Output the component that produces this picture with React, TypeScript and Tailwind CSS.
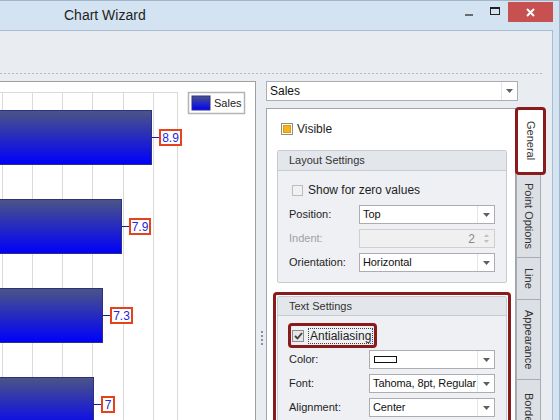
import React from 'react';

const uiFont = { fontFamily: '"Liberation Sans", Arial, sans-serif' };

const bars = [
  { y: 28, end: 151, v: '8.9', lw: 23 },
  { y: 117, end: 121, v: '7.9', lw: 22 },
  { y: 206, end: 102, v: '7.3', lw: 23 },
  { y: 295, end: 93, v: '7', lw: 14 },
];

const gridX = [2, 32, 62, 92, 123, 153, 177];

function Arrow({ color = '#606060' }: { color?: string }) {
  return (
    <svg width="7" height="4" viewBox="0 0 7 4">
      <path d="M0 0h7L3.5 4z" fill={color} />
    </svg>
  );
}

function Combo({ children, className }: { children: React.ReactNode; className: string }) {
  return (
    <div className={`h-[19px] flex items-stretch bg-white border border-[#abadb3] ${className}`}>
      <div className="flex-1 flex items-center pl-[3px] text-[#111] overflow-hidden whitespace-nowrap tracking-[-0.1px]">{children}</div>
      <div className="w-[17px] border-l border-[#e3e3e8] flex items-center justify-center shrink-0">
        <Arrow />
      </div>
    </div>
  );
}

function Row({ label, labelW, children, muted }: { label: string; labelW: string; children: React.ReactNode; muted?: boolean }) {
  return (
    <div className="flex items-center h-[19px]">
      <div className={`${labelW} ${muted ? 'text-[#a0a0a0]' : 'text-[#1e1e1e]'}`}>{label}</div>
      {children}
    </div>
  );
}

function Chart() {
  return (
    <svg width="255" height="338" className="block">
      <defs>
        <linearGradient id="barGrad" x1="0" y1="0" x2="0" y2="1">
          <stop offset="0" stopColor="#4c5585" />
          <stop offset="1" stopColor="#0000fa" />
        </linearGradient>
      </defs>
      {gridX.map((x) => (
        <line key={x} x1={x + 0.5} y1={10} x2={x + 0.5} y2={338} stroke="#dadada" strokeWidth="1" />
      ))}
      <line x1={0} y1={10.5} x2={178} y2={10.5} stroke="#dadada" strokeWidth="1" />
      {bars.map((b) => (
        <g key={b.v}>
          <rect x={-2} y={b.y + 0.5} width={b.end + 2.5} height={54} fill="url(#barGrad)" stroke="#2a3183" strokeWidth="1" />
          <line x1={b.end + 1} y1={b.y + 27.5} x2={b.end + 8} y2={b.y + 27.5} stroke="#1c1ca8" strokeWidth="1" />
          <rect x={b.end + 9} y={b.y + 20} width={b.lw - 2} height={15} fill="#fff" stroke="#e4431c" strokeWidth="2" />
          <text
            x={b.end + 8 + b.lw / 2}
            y={b.y + 32}
            textAnchor="middle"
            fontSize="12"
            fill="#2525e0"
            style={uiFont}
          >
            {b.v}
          </text>
        </g>
      ))}
      <rect x={188.5} y={10.5} width={56} height={21} fill="#fff" stroke="#b4b4b4" strokeWidth="1.5" />
      <rect x={192} y={14} width={18} height={14} fill="url(#barGrad)" stroke="#2a3183" strokeWidth="1" />
      <text x={214} y={25} fontSize="11" fill="#222" style={uiFont}>
        Sales
      </text>
    </svg>
  );
}

function VTab({ label, h }: { label: string; h: string }) {
  return (
    <div className={`${h} w-[25px] ml-[1px] bg-[#dcdfe4] border-x border-b border-[#a9adb3] flex items-center justify-center`}>
      <span className="[writing-mode:vertical-rl] text-[11px] text-[#333] whitespace-nowrap">{label}</span>
    </div>
  );
}

export default function App() {
  return (
    <div className="w-[560px] h-[420px] overflow-hidden bg-[#d3e3f2] border-t border-r border-[#a2b5c9] flex flex-col text-[11px]" style={uiFont}>
      {/* title bar */}
      <div className="h-[29px] flex items-start shrink-0">
        <div className="flex-1 pl-[64px] leading-[29px] text-[14px] text-[#1f1f1f]">Chart Wizard</div>
        <div className="w-[26px] h-[20px] flex items-center justify-center">
          <div className="w-[8px] h-[2px] bg-[#6b6b6b] mt-[7px]" />
        </div>
        <div className="w-[26px] h-[20px] flex items-center justify-center">
          <div className="w-[10px] h-[8px] border border-t-2 border-[#222] -mt-[1px]" />
        </div>
        <div className="w-[45px] h-[20px] mt-[1px] bg-[#c75050] flex items-center justify-center mr-[6px]">
          <svg width="9" height="9" viewBox="0 0 9 9">
            <path d="M1 1l7 7M8 1L1 8" stroke="#fff" strokeWidth="2" />
          </svg>
        </div>
      </div>

      {/* window body */}
      <div className="flex-1 flex flex-col bg-[#e9ecf1] border-t border-r border-[#a9bccf] mr-[6px] min-h-0">
        <div className="h-[42px] shrink-0" />
        <div className="h-[1px] w-[542px] bg-[repeating-linear-gradient(90deg,#b5b8bd_0_2px,transparent_2px_4px)]" />
        <div className="flex flex-1 pt-[7px] min-h-0">
          {/* chart */}
          <div className="w-[256px] bg-white border-t border-r border-[#a0a0a0] shrink-0">
            <Chart />
          </div>

          {/* splitter */}
          <div className="w-[10px] shrink-0 pl-[5px] pt-[250px] flex flex-col gap-[2px]">
            {[0, 1, 2, 3].map((i) => (
              <div key={i} className="w-[2px] h-[2px] bg-[#8592a0]" />
            ))}
          </div>

          {/* settings panel */}
          <div className="flex-1 flex flex-col">
            <div className="w-[252px] h-[20px] flex items-stretch bg-white border border-[#abadb3]">
              <div className="flex-1 flex items-center pl-[3px] text-[12px] text-[#111]">Sales</div>
              <div className="w-[16px] border-l border-[#e3e3e8] flex items-center justify-center">
                <Arrow />
              </div>
            </div>

            <div className="flex items-start mt-[6px]">
              {/* tab page */}
              <div className="w-[250px] h-[330px] mt-[1px] bg-white border border-[#a0a4aa] pl-[10px] pr-[8px] pt-[13px]">
                <div className="flex items-center h-[14px] gap-[4px] ml-[4px]">
                  <div className="w-[12px] h-[12px] border border-[#8c8c8c] bg-white p-[1px]">
                    <div className="w-full h-full bg-[#f6b41c] border border-[#e39a00]" />
                  </div>
                  <span className="text-[12px] text-[#1e1e1e]">Visible</span>
                </div>

                {/* layout settings */}
                <div className="mt-[14px] bg-[#eef0f4] border border-[#c6cbd2] rounded-[2px]">
                  <div className="h-[20px] bg-[#e3e7ec] border-b border-[#c6cbd2] flex items-center pl-[11px] text-[#333]">
                    Layout Settings
                  </div>
                  <div className="pl-[11px] pr-[11px] pt-[12px] pb-[10px] flex flex-col">
                    <div className="flex items-center h-[14px] gap-[5px] pl-[3px]">
                      <div className="w-[11px] h-[11px] border border-[#bdbdbd] bg-[#f1f1f1]" />
                      <span className="text-[#1e1e1e] text-[12px]">Show for zero values</span>
                    </div>
                    <div className="flex flex-col gap-[5px] mt-[8px]">
                      <Row label="Position:" labelW="w-[70px]">
                        <Combo className="w-[136px]">Top</Combo>
                      </Row>
                      <Row label="Indent:" labelW="w-[70px]" muted>
                        <div className="w-[136px] h-[19px] flex items-stretch bg-[#f0f0f0] border border-[#cfcfcf]">
                          <div className="flex-1 flex items-center justify-end pr-[4px] text-[#8a8a8a] text-[12px]">2</div>
                          <div className="w-[15px] flex flex-col items-center justify-center gap-[3px]">
                            <svg width="5" height="3" viewBox="0 0 5 3"><path d="M0 3h5L2.5 0z" fill="#c0c0c0" /></svg>
                            <svg width="5" height="3" viewBox="0 0 5 3"><path d="M0 0h5L2.5 3z" fill="#c0c0c0" /></svg>
                          </div>
                        </div>
                      </Row>
                      <Row label="Orientation:" labelW="w-[70px]">
                        <Combo className="w-[136px]">Horizontal</Combo>
                      </Row>
                    </div>
                  </div>
                </div>

                {/* text settings */}
                <div className="mt-[9px] -mx-[4px] border-[3px] border-[#8b1a1a] rounded-[4px] p-[1px]">
                  <div className="bg-[#eef0f4] border border-[#c6cbd2] rounded-[2px]">
                    <div className="h-[19px] bg-[#e3e7ec] border-b border-[#c6cbd2] flex items-center pl-[11px] text-[#333]">
                      Text Settings
                    </div>
                    <div className="pl-[11px] pr-[11px] pt-[7px] pb-[6px] flex flex-col">
                      <div className="self-start ml-[-1px] h-[25px] border-[3px] border-[#8b1a1a] rounded-[4px] flex items-center pl-[1px] pr-[1px]">
                        <div className="w-[12px] h-[12px] border border-[#8c8c8c] bg-[#e6e6e6] flex items-center justify-center">
                          <svg width="9" height="8" viewBox="0 0 9 8">
                            <path d="M1 4l2.5 2.5L8 1" stroke="#404040" strokeWidth="1.8" fill="none" />
                          </svg>
                        </div>
                        <span className="ml-[4px] px-[1px] border border-dotted border-[#444] text-[12px] leading-[14px] text-[#1e1e1e]">
                          Antialiasing
                        </span>
                      </div>
                      <div className="flex flex-col gap-[5px] mt-[2px]">
                        <Row label="Color:" labelW="w-[80px]">
                          <Combo className="w-[126px]">
                            <div className="w-[23px] h-[7px] border border-[#111] bg-white ml-[1px]" />
                          </Combo>
                        </Row>
                        <Row label="Font:" labelW="w-[80px]">
                          <Combo className="w-[126px]">Tahoma, 8pt, Regular</Combo>
                        </Row>
                        <Row label="Alignment:" labelW="w-[80px]">
                          <Combo className="w-[126px]">Center</Combo>
                        </Row>
                      </div>
                    </div>
                  </div>
                </div>
              </div>

              {/* vertical tabs */}
              <div className="flex flex-col -ml-[1px]">
                <div className="w-[31px] h-[68px] border-[3px] border-[#8b1a1a] rounded-[4px] bg-white flex items-center justify-center">
                  <span className="[writing-mode:vertical-rl] text-[11px] text-[#333]">General</span>
                </div>
                <VTab label="Point Options" h="h-[83px]" />
                <VTab label="Line" h="h-[42px]" />
                <VTab label="Appearance" h="h-[80px]" />
                <VTab label="Border" h="h-[60px]" />
              </div>
            </div>
          </div>
        </div>
      </div>
    </div>
  );
}
